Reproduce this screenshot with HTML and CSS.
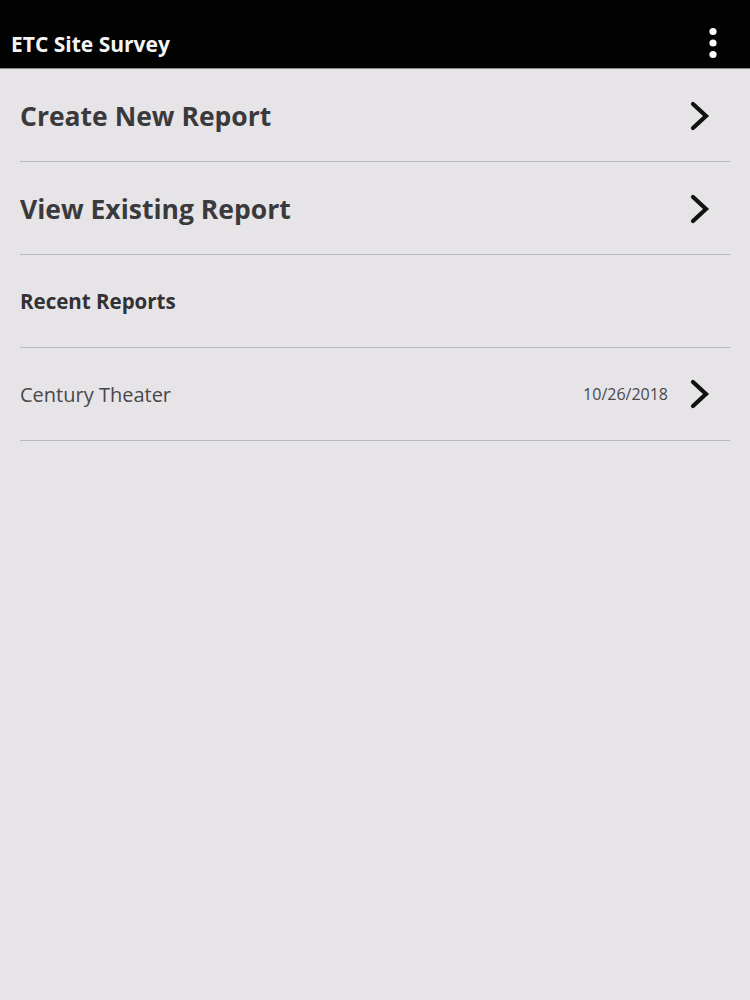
FILE: index.html
```html
<!DOCTYPE html>
<html>
<head>
<meta charset="utf-8">
<link rel="stylesheet" href="styles.css">
</head>
<body>
<header class="appbar">
  <h1 class="app-title">ETC Site Survey</h1>
  <div class="menu" aria-label="More options">
    <svg width="10" height="32" viewBox="0 0 10 32"><circle cx="5" cy="4.5" r="3.6" fill="#fff"/><circle cx="5" cy="16" r="3.6" fill="#fff"/><circle cx="5" cy="27.5" r="3.6" fill="#fff"/></svg>
  </div>
</header>
<main class="list">
  <div class="row row-big">
    <span class="big-label">Create New Report</span>
    <svg class="chev" width="22" height="32" viewBox="0 0 22 32"><path d="M4 4 L17 16 L4 28" fill="none" stroke="#111" stroke-width="4.2" stroke-linecap="round" stroke-linejoin="miter"/></svg>
  </div>
  <div class="row row-big">
    <span class="big-label">View Existing Report</span>
    <svg class="chev" width="22" height="32" viewBox="0 0 22 32"><path d="M4 4 L17 16 L4 28" fill="none" stroke="#111" stroke-width="4.2" stroke-linecap="round" stroke-linejoin="miter"/></svg>
  </div>
  <div class="row row-section">
    <span class="section-label">Recent Reports</span>
  </div>
  <div class="row row-item">
    <span class="item-label">Century Theater</span>
    <span class="item-date">10/26/2018</span>
    <svg class="chev" width="22" height="32" viewBox="0 0 22 32"><path d="M4 4 L17 16 L4 28" fill="none" stroke="#111" stroke-width="4.2" stroke-linecap="round" stroke-linejoin="miter"/></svg>
  </div>
</main>
</body>
</html>
```

FILE: styles.css
```css
html, body {
  margin: 0;
  padding: 0;
  background: #e6e4e7;
  font-family: "Open Sans", "Noto Sans", sans-serif;
}
body {
  width: 750px;
  height: 1000px;
}
.appbar {
  height: 68px;
  background: #030303;
  border-bottom: 1px solid #8a898b;
  display: flex;
  align-items: center;
  justify-content: space-between;
  padding: 0 32px 0 11px;
}
.app-title {
  margin: 0;
  padding-top: 20px;
  color: #f4f4f4;
  font-size: 21px;
  font-weight: 700;
}
.menu {
  display: flex;
  align-items: center;
  padding-top: 18px;
}
.list {
  padding: 0 20px;
}
.row {
  height: 92px;
  border-bottom: 1px solid #b9b8ba;
  display: flex;
  align-items: center;
}
.row-big {
  padding-top: 2px;
  height: 90px;
}
.big-label {
  flex: 1;
  color: #3a393c;
  font-size: 26.5px;
  font-weight: 700;
}
.section-label {
  color: #323134;
  font-size: 20.5px;
  font-weight: 700;
}
.item-label {
  flex: 1;
  color: #48474a;
  font-size: 20px;
}
.item-date {
  color: #4a494c;
  font-size: 16px;
  margin-right: 21px;
}
.chev {
  margin-right: 19px;
  flex: none;
}
```
